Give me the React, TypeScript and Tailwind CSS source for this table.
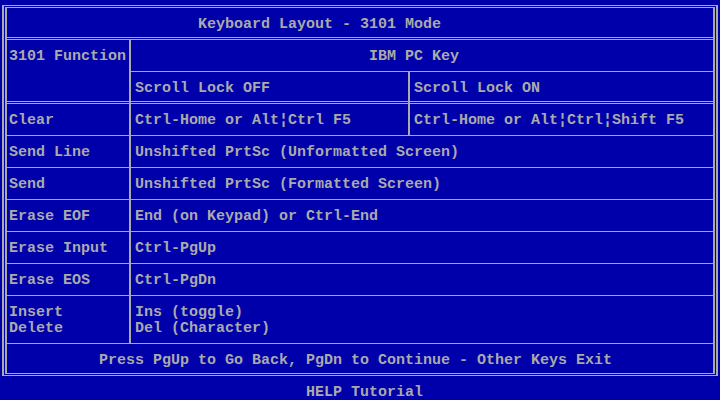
import React from "react";

const gray = "border-[#aaaaaa]";

const Divider = () => <div className="h-px shrink-0 bg-[#aaaaaa]" />;

const DoubleDivider = ({ cross = 0 }: { cross?: 0 | 1 | 2 }) => {
  if (cross === 0) {
    return <div className={`h-[3px] shrink-0 border-y ${gray}`} />;
  }
  return (
    <div className="flex h-[3px] shrink-0">
      <div className={`w-[122px] border-y ${gray}`} />
      <div className="w-[2px] bg-[#aaaaaa]" />
      {cross === 2 ? (
        <>
          <div className={`w-[277px] border-y ${gray}`} />
          <div className="w-[2px] bg-[#aaaaaa]" />
        </>
      ) : null}
      <div className={`flex-1 border-y ${gray}`} />
    </div>
  );
};

const Row = ({
  label,
  value,
  tall,
}: {
  label: React.ReactNode;
  value: React.ReactNode;
  tall?: boolean;
}) => (
  <div className={`flex shrink-0 ${tall ? "h-[47px]" : "h-[31px]"}`}>
    <div className="w-[122px] pl-[2px] pt-[9px]">{label}</div>
    <div className={`flex-1 border-l-2 ${gray} pl-1 pt-[9px]`}>{value}</div>
  </div>
);

const rows = [
  { label: "Send Line", value: "Unshifted PrtSc (Unformatted Screen)" },
  { label: "Send", value: "Unshifted PrtSc (Formatted Screen)" },
  { label: "Erase EOF", value: "End (on Keypad) or Ctrl-End" },
  { label: "Erase Input", value: "Ctrl-PgUp" },
  { label: "Erase EOS", value: "Ctrl-PgDn" },
];

export default function App() {
  return (
    <div className="h-[400px] w-[720px] overflow-hidden whitespace-pre bg-[#0000aa] font-['Liberation_Mono',monospace] text-[15px] font-bold leading-4 text-[#aaaaaa]">
      <div className={`ml-[2px] mt-[5px] h-[371px] w-[716px] border-x-2 border-y ${gray} p-px`}>
        <div className={`flex h-full flex-col border-x-2 border-y ${gray}`}>
          {/* title */}
          <div className="h-[29px] shrink-0 pl-[191px] pt-[9px]">Keyboard Layout - 3101 Mode</div>
          <DoubleDivider />

          {/* header */}
          <div className="flex h-[61px] shrink-0">
            <div className="w-[122px] pl-[2px] pt-[9px]">3101 Function</div>
            <div className={`flex flex-1 flex-col border-l-2 ${gray}`}>
              <div className="h-[31px] pl-[238px] pt-[9px]">IBM PC Key</div>
              <Divider />
              <div className="flex flex-1">
                <div className="w-[277px] pl-1 pt-[9px]">Scroll Lock OFF</div>
                <div className={`flex-1 border-l-2 ${gray} pl-1 pt-[9px]`}>Scroll Lock ON</div>
              </div>
            </div>
          </div>
          <DoubleDivider cross={2} />

          <div className="flex h-[31px] shrink-0">
            <div className="w-[122px] pl-[2px] pt-[9px]">Clear</div>
            <div className={`w-[279px] border-l-2 ${gray} pl-1 pt-[9px]`}>Ctrl-Home or Alt¦Ctrl F5</div>
            <div className={`flex-1 border-l-2 ${gray} pl-1 pt-[9px]`}>Ctrl-Home or Alt¦Ctrl¦Shift F5</div>
          </div>

          {rows.map((r) => (
            <React.Fragment key={r.label}>
              <Divider />
              <Row label={r.label} value={r.value} />
            </React.Fragment>
          ))}

          <Divider />
          <Row
            tall
            label={
              <>
                <div>Insert</div>
                <div>Delete</div>
              </>
            }
            value={
              <>
                <div>Ins (toggle)</div>
                <div>Del (Character)</div>
              </>
            }
          />
          <Divider />

          {/* footer */}
          <div className="h-[29px] shrink-0 pl-[92px] pt-[9px]">
            Press PgUp to Go Back, PgDn to Continue - Other Keys Exit
          </div>
        </div>
      </div>
      <div className="pl-[306px] pt-[9px]">HELP Tutorial</div>
    </div>
  );
}
